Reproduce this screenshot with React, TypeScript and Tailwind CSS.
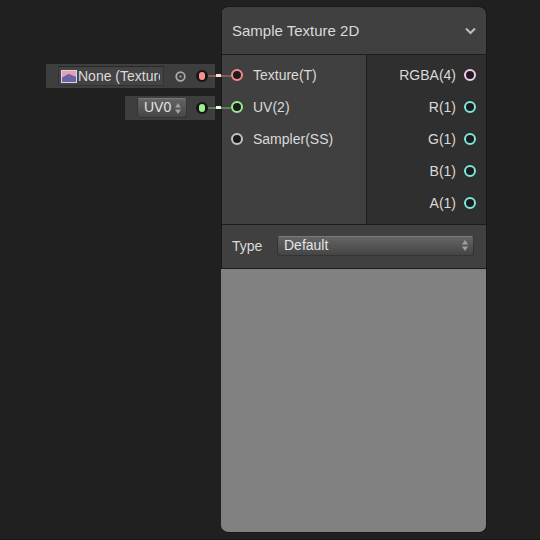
import React from "react";

const PORT_COLORS = {
  texture: "border-[#f98b8b]",
  uv: "border-[#96ee8e]",
  sampler: "border-[#c4c4c4]",
  vector4: "border-[#f6c9f2]",
  vector1: "border-[#7fe3e1]",
};

type PortKind = keyof typeof PORT_COLORS;

function Ring({ kind }: { kind: PortKind }) {
  return (
    <span
      className={`size-3 shrink-0 rounded-full border-2 bg-[#1c1c1c] ${PORT_COLORS[kind]}`}
    />
  );
}

function InputPort({ kind, label }: { kind: PortKind; label: string }) {
  return (
    <li className="flex h-8 items-center gap-[10px] pl-[9px]">
      <Ring kind={kind} />
      <span>{label}</span>
    </li>
  );
}

function OutputPort({ kind, label }: { kind: PortKind; label: string }) {
  return (
    <li className="flex h-8 items-center justify-end gap-2 pr-[10px]">
      <span>{label}</span>
      <Ring kind={kind} />
    </li>
  );
}

function Plug({ dot, wire, joint }: { dot: string; wire: string; joint: string }) {
  return (
    <span className="relative flex size-3 shrink-0 items-center justify-center rounded-full bg-[#161616]">
      <span className={`h-[8px] w-[6px] rounded-[3px] ${dot}`} />
      <span className="absolute left-full top-[5px] z-10 flex h-[2px] w-[23px]">
        <span className={`w-2 ${wire}`} />
        <span className={`-mt-px h-[3px] w-[5px] ${joint}`} />
        <span className={`grow ${wire}`} />
      </span>
    </span>
  );
}

function UpDown() {
  return (
    <svg
      viewBox="0 0 6 11"
      className="pointer-events-none absolute right-[6px] h-[11px] w-[6px] fill-[#a0a0a0]"
      aria-hidden="true"
    >
      <path d="M3 0 6 4.6H0zM0 6.4h6L3 11z" />
    </svg>
  );
}

function Thumbnail() {
  return (
    <svg viewBox="0 0 16 13" className="h-[13px] w-4 shrink-0" aria-hidden="true">
      <rect width="16" height="13" fill="#d9d5df" />
      <rect x="1" y="1" width="14" height="11" fill="#e99fb2" />
      <path d="M1 7.5 3 6.5 4.5 5.5 7 4 9 4.2 11.5 5.5 13 6 15 7V12H1z" fill="#6c62a6" />
    </svg>
  );
}

const SELECT =
  "w-full appearance-none rounded-[3px] border border-[#343434] border-t-[#7a7a7a] bg-linear-to-b from-[#646464] to-[#454545] pb-1 pl-[6px] leading-4 text-[#e4e4e4] outline-none";

export default function App() {
  return (
    <main className="flex min-h-screen items-start justify-end border-b border-[#1a1418] bg-[#202020] pr-[53px] pt-[6px] font-['Liberation_Sans',Arial,sans-serif] text-[14px] leading-5 text-[#dadada]">
      <div className="mr-[6px] flex flex-col items-end gap-2 pt-[58px]">
        <div className="flex h-6 items-center bg-[#3e3e3e] pl-3 pr-[7px]">
          <label className="flex h-5 w-[106px] items-center border border-[#333333] border-t-[#292929] bg-[#434343] pl-[2px] pr-[3px]">
            <Thumbnail />
            <input
              readOnly
              aria-label="Texture"
              value="None (Texture)"
              className="ml-px w-0 min-w-0 grow bg-transparent pb-px outline-none"
            />
          </label>
          <button aria-label="Pick texture" className="ml-[11px] mr-[10px] size-[11px]">
            <svg viewBox="0 0 11 11" className="size-[11px]" aria-hidden="true">
              <circle cx="5.5" cy="5.5" r="4.3" fill="none" stroke="#aaaaaa" strokeWidth="1.7" />
              <circle cx="5.5" cy="5.5" r="1.1" fill="#aaaaaa" />
            </svg>
          </button>
          <Plug dot="bg-[#fb8f8f]" wire="bg-[#7d5c5c]" joint="bg-[#ffdcdc]" />
        </div>
        <div className="flex h-6 items-center bg-[#3e3e3e] pl-3 pr-[7px]">
          <div className="relative mr-[9px] flex w-[50px] items-center">
            <select aria-label="UV channel" className={`h-5 ${SELECT}`}>
              <option>UV0</option>
            </select>
            <UpDown />
          </div>
          <Plug dot="bg-[#9bf08f]" wire="bg-[#5f7a5d]" joint="bg-[#dcffd8]" />
        </div>
      </div>

      <section className="w-[266px] overflow-hidden rounded-lg border border-l-0 border-[#181818] bg-[#404040]">
        <div className="border-l border-[#181818]">
          <header className="flex h-12 items-center justify-between border-b border-[#1c1c1c] px-[10px]">
            <h1 className="text-[15px]">Sample Texture 2D</h1>
            <button aria-label="Collapse">
              <svg viewBox="0 0 11 8" className="h-2 w-[11px]" aria-hidden="true">
                <path d="M1 1.5 5.5 6 10 1.5" fill="none" stroke="#bdbdbd" strokeWidth="2" />
              </svg>
            </button>
          </header>
          <div className="flex border-b border-[#1c1c1c]">
            <ul className="w-[145px] border-r border-[#1c1c1c] pb-[5px] pt-1">
              <InputPort kind="texture" label="Texture(T)" />
              <InputPort kind="uv" label="UV(2)" />
              <InputPort kind="sampler" label="Sampler(SS)" />
            </ul>
            <ul className="grow bg-[#2f2f2f] pb-[5px] pt-1">
              <OutputPort kind="vector4" label="RGBA(4)" />
              <OutputPort kind="vector1" label="R(1)" />
              <OutputPort kind="vector1" label="G(1)" />
              <OutputPort kind="vector1" label="B(1)" />
              <OutputPort kind="vector1" label="A(1)" />
            </ul>
          </div>
          <div className="flex h-11 items-center border-b border-[#1c1c1c] pb-[2px] pl-[10px] pr-3">
            <label htmlFor="type" className="w-[45px]">
              Type
            </label>
            <div className="relative flex grow items-center">
              <select id="type" className={`h-5 ${SELECT}`}>
                <option>Default</option>
              </select>
              <UpDown />
            </div>
          </div>
        </div>
        <div className="h-[263px] bg-[#818181]" />
      </section>
    </main>
  );
}
